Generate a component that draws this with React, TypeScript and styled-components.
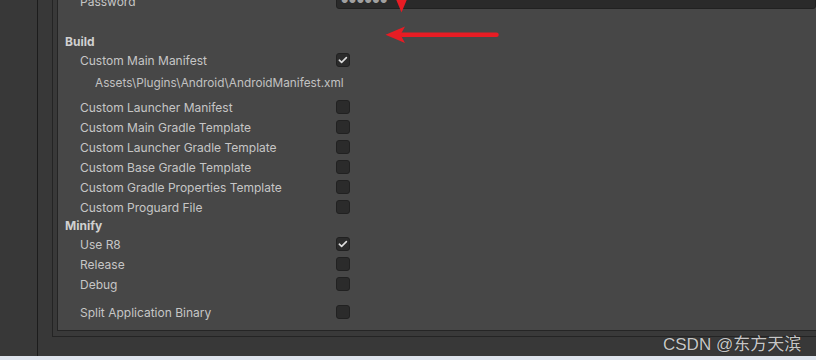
import styled, { createGlobalStyle } from "styled-components";

const GlobalStyle = createGlobalStyle`
  html, body {
    margin: 0;
    padding: 0;
    background: #383838;
  }
  * {
    box-sizing: border-box;
  }
`;

const Screen = styled.div`
  position: relative;
  width: 816px;
  height: 360px;
  overflow: hidden;
  display: flex;
  flex-direction: column;
  font-family: Inter, "Noto Sans", sans-serif;
  font-size: 12px;
  color: #c4c4c4;
`;

const Workspace = styled.div`
  flex: 0 0 356px;
  display: flex;
  background: #383838;
`;

const SideStrip = styled.div`
  flex: 0 0 38px;
  border-right: 1px solid #1c1c1c;
`;

const FrameArea = styled.div`
  flex: 1;
  display: flex;
  padding: 0 0 19px 14px;
`;

const OuterFrame = styled.div`
  flex: 1;
  display: flex;
  border-left: 1px solid #242424;
  border-bottom: 1px solid #242424;
  padding: 0 0 5px 4px;
  background: #393939;
`;

const Panel = styled.div`
  flex: 1;
  background: #474747;
  border-left: 1px solid #252525;
  border-bottom: 1px solid #252525;
  padding: 0 0 0 7px;
  overflow: hidden;
`;

const PanelContent = styled.div`
  margin-top: -9px;
  display: flex;
  flex-direction: column;
`;

const Row = styled.div<{ $indent?: number; $gap?: number }>`
  display: flex;
  align-items: center;
  height: 20px;
  padding-left: ${(p) => p.$indent ?? 15}px;
  margin-top: ${(p) => p.$gap ?? 0}px;
  white-space: nowrap;
`;

const Label = styled.span`
  flex: 0 0 256px;
  color: #c6c6c6;
`;

const Header = styled.div`
  height: 17px;
  display: flex;
  align-items: center;
  font-weight: 700;
  color: #d0d0d0;
`;

const PathRow = styled.div`
  height: 27px;
  display: flex;
  align-items: center;
  padding: 0 0 1px 30px;
  font-size: 11.8px;
  color: #c2c2c2;
  white-space: nowrap;
`;

const Spacer = styled.div<{ $h: number }>`
  height: ${(p) => p.$h}px;
`;

const PasswordField = styled.div`
  flex: 1;
  height: 18px;
  margin-top: -2px;
  background: #2a2a2a;
  border: 1px solid #212121;
  border-radius: 3px;
  padding-left: 4px;
  display: flex;
  align-items: center;
  font-size: 8px;
  letter-spacing: 0.5px;
  color: #a0a0a0;
`;

const Box = styled.span`
  width: 14px;
  height: 14px;
  flex: 0 0 14px;
  border-radius: 3px;
  background: #2b2b2b;
  border: 1px solid #212121;
  display: flex;
  align-items: center;
  justify-content: center;
`;

const Overlay = styled.svg`
  position: absolute;
  left: 0;
  top: 0;
  pointer-events: none;
`;

const Watermark = styled.div`
  position: absolute;
  left: 663px;
  top: 330px;
  font-family: "Liberation Sans", "Noto Sans CJK SC", sans-serif;
  font-size: 17px;
  color: rgba(222, 222, 222, 0.9);
  text-shadow: 0 0 1px rgba(0, 0, 0, 0.6);
  white-space: nowrap;
`;

const BottomStrip = styled.div`
  flex: 1;
  background: #dfe5ee;
`;

const CheckBox = ({ checked }: { checked?: boolean }) => (
  <Box>
    {checked && (
      <svg width="12" height="12" viewBox="0 0 12 12">
        <path
          d="M2.3 6.2 L4.6 8.4 L9.4 3.6"
          fill="none"
          stroke="#dedede"
          strokeWidth="1.6"
          strokeLinecap="round"
          strokeLinejoin="round"
        />
      </svg>
    )}
  </Box>
);

const Toggle = ({
  label,
  checked,
  gap,
}: {
  label: string;
  checked?: boolean;
  gap?: number;
}) => (
  <Row $gap={gap}>
    <Label>{label}</Label>
    <CheckBox checked={checked} />
  </Row>
);

const buildItems = [
  "Custom Launcher Manifest",
  "Custom Main Gradle Template",
  "Custom Launcher Gradle Template",
  "Custom Base Gradle Template",
  "Custom Gradle Properties Template",
  "Custom Proguard File",
];

const App = () => {
  return (
    <Screen>
      <GlobalStyle />
      <Workspace>
        <SideStrip />
        <FrameArea>
          <OuterFrame>
            <Panel>
              <PanelContent>
                <Row>
                  <Label>Password</Label>
                  <PasswordField>●●●●●●</PasswordField>
                </Row>
                <Spacer $h={22} />
                <Header>Build</Header>
                <Toggle label="Custom Main Manifest" checked />
                <PathRow>Assets\Plugins\Android\AndroidManifest.xml</PathRow>
                {buildItems.map((item) => (
                  <Toggle key={item} label={item} />
                ))}
                <Header>Minify</Header>
                <Toggle label="Use R8" checked />
                <Toggle label="Release" />
                <Toggle label="Debug" />
                <Toggle label="Split Application Binary" gap={8} />
              </PanelContent>
            </Panel>
          </OuterFrame>
        </FrameArea>
      </Workspace>
      <BottomStrip />

      <Overlay width="816" height="360" viewBox="0 0 816 360">
        <polygon points="395.5,-2 407.5,-2 401.5,12.5" fill="#e81c24" />
        <line
          x1="402"
          y1="34.7"
          x2="496.5"
          y2="34.7"
          stroke="#e81c24"
          strokeWidth="4.5"
          strokeLinecap="round"
        />
        <polygon
          points="385.5,34.7 405,26.5 400.5,34.7 405,43"
          fill="#e81c24"
        />
      </Overlay>
      <Watermark>CSDN @东方天滨</Watermark>
    </Screen>
  );
};

export default App;
